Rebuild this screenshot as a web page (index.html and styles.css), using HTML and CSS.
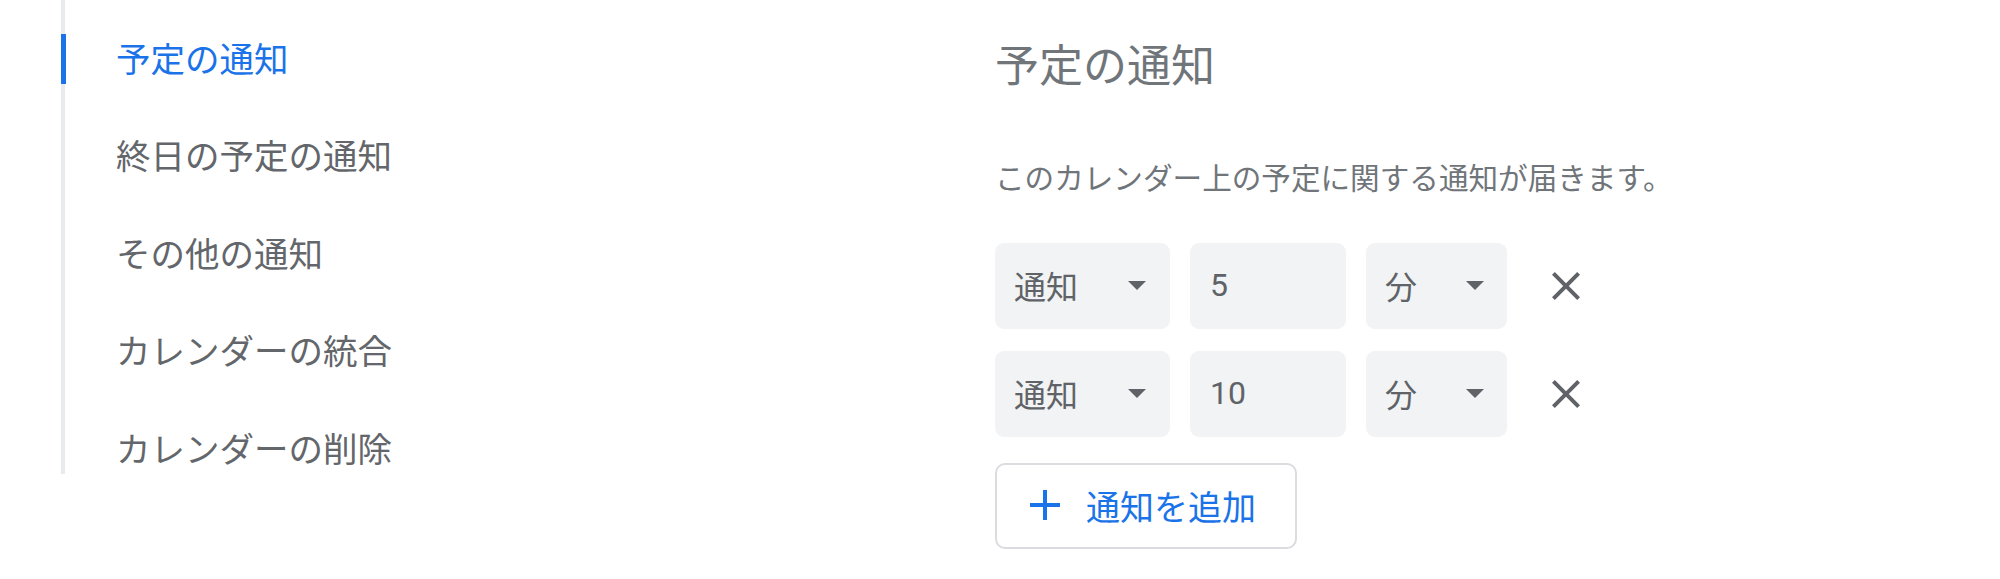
FILE: index.html
```html
<!DOCTYPE html>
<html lang="ja">
<head>
<meta charset="utf-8">
<title>予定の通知</title>
<link rel="stylesheet" href="styles.css">
</head>
<body>
<div class="page">
  <nav class="nav">
    <a class="nav-item active">予定の通知</a>
    <a class="nav-item">終日の予定の通知</a>
    <a class="nav-item">その他の通知</a>
    <a class="nav-item">カレンダーの統合</a>
    <a class="nav-item">カレンダーの削除</a>
  </nav>
  <main class="main">
    <h2 class="title">予定の通知</h2>
    <p class="desc">このカレンダー上の予定に関する通知が届きます。</p>
    <div class="rows">
      <div class="row">
        <div class="field select type"><span>通知</span><svg class="caret" viewBox="0 0 10 5"><path d="M0 0l5 5 5-5z"/></svg></div>
        <div class="field number"><span>5</span></div>
        <div class="field select unit"><span>分</span><svg class="caret" viewBox="0 0 10 5"><path d="M0 0l5 5 5-5z"/></svg></div>
        <button class="remove" aria-label="削除"><svg viewBox="0 0 24 24"><path d="M19 6.41L17.59 5 12 10.59 6.41 5 5 6.41 10.59 12 5 17.59 6.41 19 12 13.41 17.59 19 19 17.59 13.41 12z"/></svg></button>
      </div>
      <div class="row">
        <div class="field select type"><span>通知</span><svg class="caret" viewBox="0 0 10 5"><path d="M0 0l5 5 5-5z"/></svg></div>
        <div class="field number"><span>10</span></div>
        <div class="field select unit"><span>分</span><svg class="caret" viewBox="0 0 10 5"><path d="M0 0l5 5 5-5z"/></svg></div>
        <button class="remove" aria-label="削除"><svg viewBox="0 0 24 24"><path d="M19 6.41L17.59 5 12 10.59 6.41 5 5 6.41 10.59 12 5 17.59 6.41 19 12 13.41 17.59 19 19 17.59 13.41 12z"/></svg></button>
      </div>
    </div>
    <button class="add"><svg class="plus" viewBox="0 0 30 30"><path d="M13 0h4v13h13v4H17v13h-4V17H0v-4h13z"/></svg><span>通知を追加</span></button>
  </main>
</div>
</body>
</html>
```
FILE: styles.css
```css
* { box-sizing: border-box; }
html, body { margin: 0; padding: 0; background: #fff; }
body {
  font-family: "Noto Sans CJK JP", "Noto Sans", sans-serif;
  color: #5f6368;
}
.page {
  display: flex;
  padding-left: 61px;
}
.nav {
  width: 934px;
  flex: none;
  border-left: 4px solid #e8eaed;
  padding-top: 34px;
  display: flex;
  flex-direction: column;
  gap: 47.5px;
  align-self: flex-start;
}
.nav-item {
  position: relative;
  height: 50px;
  display: flex;
  align-items: center;
  padding-left: 51px;
  padding-bottom: 5px;
  font-size: 34.5px;
  color: #63666a;
  white-space: nowrap;
}
.nav-item.active { color: #1a73e8; }
.nav-item.active::before {
  content: "";
  position: absolute;
  left: -4px;
  top: 0;
  width: 5px;
  height: 50px;
  background: #1a73e8;
}
.main {
  flex: 1;
  padding-top: 38px;
}
.title {
  margin: 0;
  font-weight: 400;
  font-size: 44px;
  line-height: 50px;
  color: #70757a;
}
.desc {
  margin: 69px 0 0;
  font-size: 29.6px;
  line-height: 40px;
  color: #70757a;
}
.rows {
  margin-top: 46px;
  display: flex;
  flex-direction: column;
  gap: 22px;
}
.row {
  display: flex;
  align-items: center;
  gap: 20px;
}
.field {
  height: 86px;
  background: #f1f3f4;
  border-radius: 9px;
  display: flex;
  align-items: center;
  padding: 0 24px 2px 19px;
  font-family: Roboto, "Noto Sans CJK JP", sans-serif;
  font-size: 32px;
  color: #5f6368;
}
.select { justify-content: space-between; }
.type { width: 175px; }
.number { width: 156px; padding-left: 20px; }
.unit { width: 141px; padding-right: 23px; }
.caret {
  width: 18px;
  height: 9px;
  fill: #5f6368;
}
.remove {
  margin-left: 15px;
  width: 48px;
  height: 48px;
  padding: 0;
  border: 0;
  background: none;
  display: flex;
  align-items: center;
  justify-content: center;
}
.remove svg {
  width: 48px;
  height: 48px;
  fill: #5f6368;
}
.add {
  margin-top: 26px;
  width: 302px;
  height: 86px;
  border: 2px solid #dadce0;
  border-radius: 10px;
  background: #fff;
  display: flex;
  align-items: center;
  padding: 0 0 2px 33px;
  gap: 26px;
  font-family: "Noto Sans CJK JP", sans-serif;
  font-size: 34px;
  color: #1a73e8;
}
.plus {
  width: 30px;
  height: 30px;
  fill: #1a73e8;
  flex: none;
}
```
